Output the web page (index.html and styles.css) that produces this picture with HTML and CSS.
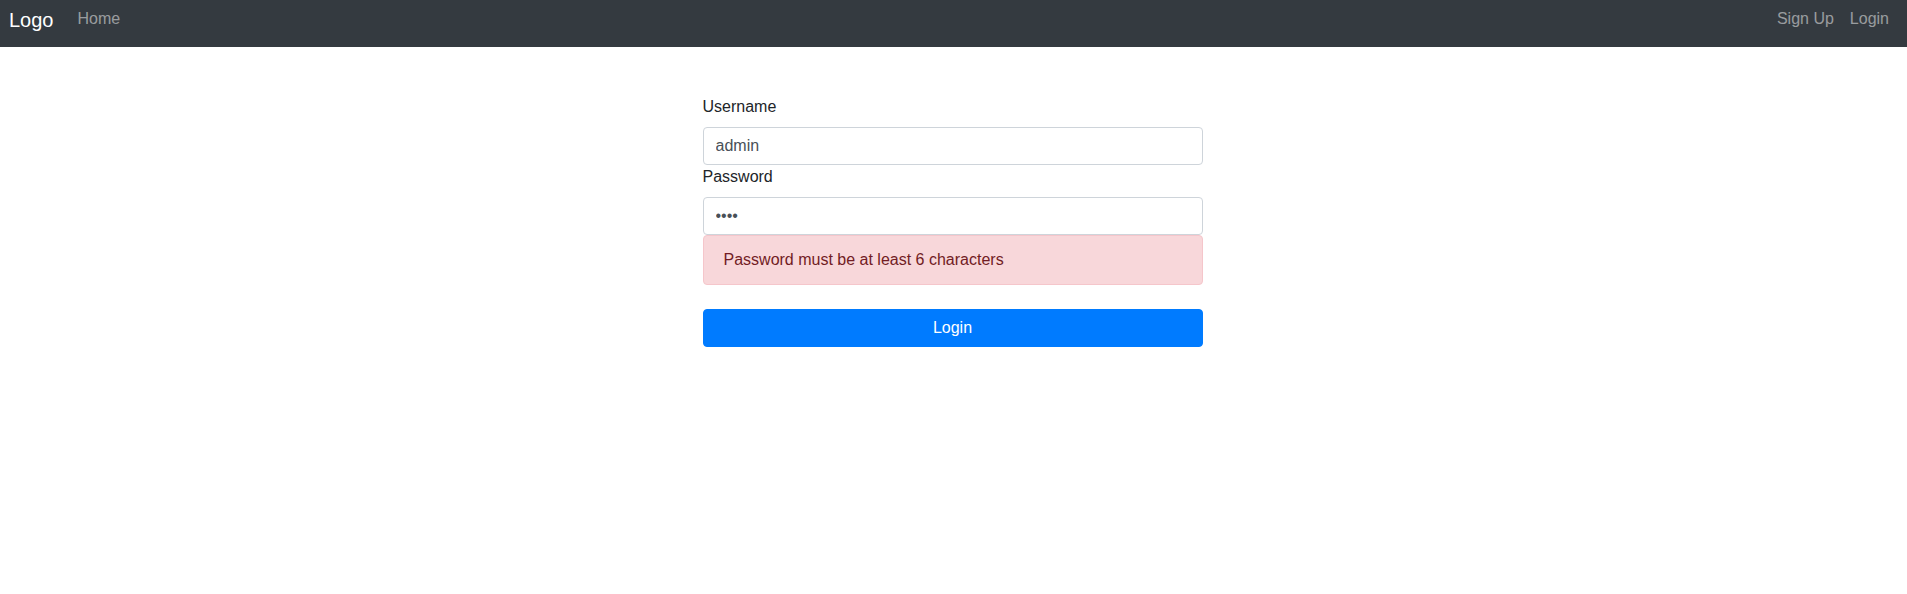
FILE: index.html
```html
<!DOCTYPE html>
<html lang="en">
<head>
<meta charset="utf-8">
<title>Login</title>
<link rel="stylesheet" href="styles.css">
</head>
<body>
<nav class="navbar">
  <a class="brand" href="#">Logo</a>
  <a class="nav-link" href="#">Home</a>
  <div class="nav-right">
    <a class="nav-link" href="#">Sign Up</a>
    <a class="nav-link" href="#">Login</a>
  </div>
</nav>
<main class="container">
  <form class="login-form">
    <label class="label" for="username">Username</label>
    <input class="control" id="username" type="text" value="admin">
    <label class="label" for="password">Password</label>
    <input class="control" id="password" type="password" value="abcd">
    <div class="alert">Password must be at least 6 characters</div>
    <button class="btn" type="button">Login</button>
  </form>
</main>
</body>
</html>
```

FILE: styles.css
```css
* { box-sizing: border-box; }
html, body {
  margin: 0;
  padding: 0;
  background: #fff;
  font-family: "Liberation Sans", Arial, Helvetica, sans-serif;
  font-size: 16px;
  color: #212529;
}
a { text-decoration: none; }

.navbar {
  display: flex;
  align-items: flex-start;
  height: 47px;
  padding: 0 10px 0 9px;
  background: #343a40;
}
.brand {
  font-size: 20px;
  line-height: 30px;
  padding-top: 5px;
  margin-right: 16px;
  color: #fff;
}
.nav-link {
  font-size: 16px;
  line-height: 24px;
  padding: 7px 8px 0;
  color: rgba(255, 255, 255, 0.5);
}
.nav-right {
  display: flex;
  margin-left: auto;
}

.container {
  margin-top: 48px;
  padding-right: 2px;
  display: flex;
  justify-content: center;
}
.login-form {
  width: 500px;
  display: flex;
  flex-direction: column;
}
.label {
  display: block;
  line-height: 24px;
  margin-bottom: 8px;
  color: #212529;
}
.control {
  display: block;
  width: 100%;
  height: 38px;
  padding: 6px 12px;
  font-family: inherit;
  font-size: 16px;
  line-height: 24px;
  color: #495057;
  background: #fff;
  border: 1px solid #ced4da;
  border-radius: 4px;
  outline: none;
  margin: 0;
}
.alert {
  padding: 12px 20px;
  line-height: 24px;
  color: #721c24;
  background: #f8d7da;
  border: 1px solid #f5c6cb;
  border-radius: 4px;
  margin-bottom: 16px;
}
.btn {
  display: block;
  width: 100%;
  height: 38px;
  margin-top: 8px;
  padding: 6px 12px;
  font-family: inherit;
  font-size: 16px;
  line-height: 24px;
  color: #fff;
  background: #007bff;
  border: 1px solid #007bff;
  border-radius: 4px;
  cursor: pointer;
}
```
